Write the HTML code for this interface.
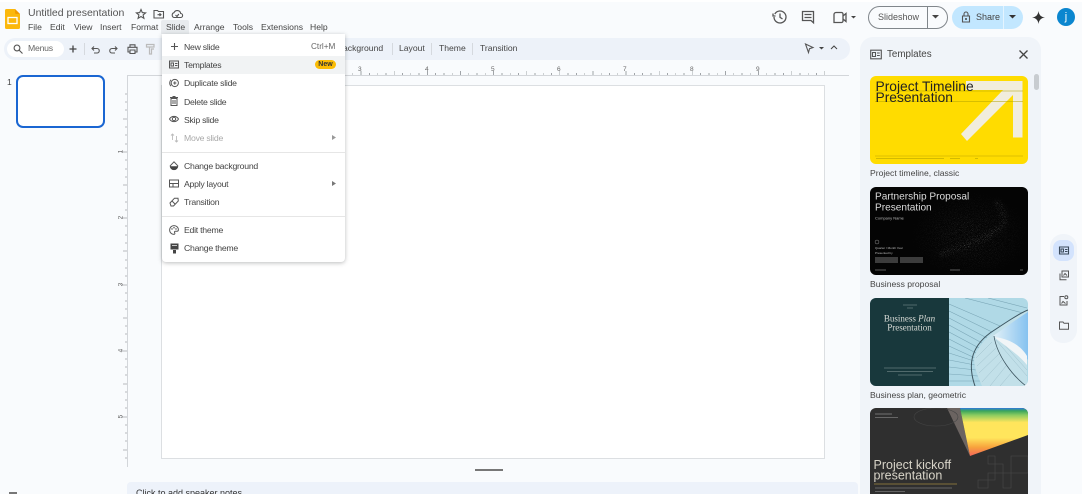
<!DOCTYPE html>
<html><head><meta charset="utf-8">
<style>
html,body{margin:0;padding:0;width:1082px;height:494px;overflow:hidden;background:#f9fbfd;font-family:"Liberation Sans",sans-serif;color:#444746}
#p{position:relative;width:1082px;height:494px;overflow:hidden;background:#f9fbfd;filter:blur(.3px)}
.a{position:absolute;white-space:nowrap}
.t{position:absolute;white-space:nowrap;font-size:8.600px;line-height:12px;color:#444}
.m{position:absolute;white-space:nowrap;font-size:8.700px;letter-spacing:-.25px;line-height:12px;color:#444;left:184px}
svg{position:absolute;overflow:visible}
.ic{fill:none;stroke:#555;stroke-width:1.1}
.sep{position:absolute;left:162px;width:183px;height:1px;background:#e6e6e6}
</style></head><body><div id="p">
<div class="a" style="left:0;top:0;width:1082px;height:2px;background:#fff"></div>

<!-- logo -->
<svg style="left:5px;top:9px" width="15" height="20" viewBox="0 0 15 20"><path d="M1.500 0H10L15 5V18.500A1.500 1.500 0 0 1 13.500 20H1.500A1.500 1.500 0 0 1 0 18.500V1.500A1.500 1.500 0 0 1 1.500 0Z" fill="#fbb80c"/><path d="M10 0L15 5H11.500A1.500 1.500 0 0 1 10 3.500Z" fill="#f29900"/><rect x="3" y="8.500" width="9" height="6" fill="none" stroke="#fff" stroke-width="1.300"/></svg>

<div class="a" style="left:28px;top:6px;font-size:10.500px;line-height:15px;color:#555">Untitled presentation</div>
<svg style="left:135px;top:8px" width="12" height="12" viewBox="0 0 12 12"><path class="ic" d="M6 1.500L7.300 4.600L10.600 4.900L8.100 7L8.900 10.300L6 8.500L3.100 10.300L3.900 7L1.400 4.900L4.700 4.600Z"/></svg>
<svg style="left:153px;top:8px" width="12" height="12" viewBox="0 0 12 12"><path class="ic" d="M1 2.500H4.500L5.500 3.500H10.500V10H1ZM4.500 6.700H8M6.500 5.300L8 6.700L6.500 8"/></svg>
<svg style="left:171px;top:8px" width="12" height="12" viewBox="0 0 12 12"><path class="ic" d="M3 9.500H9.500A2 2 0 0 0 9.700 5.500A3.500 3.500 0 0 0 3 4.700A2.500 2.500 0 0 0 3 9.500ZM4.500 7L6 8.500L7.800 6"/></svg>

<!-- menu bar -->
<div class="a" style="left:161px;top:20px;width:28px;height:14px;background:#e8ebee;border-radius:2px 2px 0 0"></div>
<div class="t" style="left:28px;top:21px">File</div>
<div class="t" style="left:50px;top:21px">Edit</div>
<div class="t" style="left:74px;top:21px">View</div>
<div class="t" style="left:100px;top:21px">Insert</div>
<div class="t" style="left:131px;top:21px">Format</div>
<div class="t" style="left:166px;top:21px">Slide</div>
<div class="t" style="left:194px;top:21px">Arrange</div>
<div class="t" style="left:233px;top:21px">Tools</div>
<div class="t" style="left:261px;top:21px">Extensions</div>
<div class="t" style="left:310px;top:21px">Help</div>

<!-- top right -->
<svg style="left:772px;top:9px" width="16" height="16" viewBox="0 0 16 16"><path class="ic" style="stroke-width:1.300" d="M2.800 5A6 6 0 1 1 2 8M1 4.500V7H3.500M8 4.500V8.300L10.500 10"/></svg>
<svg style="left:801px;top:10px" width="14" height="14" viewBox="0 0 14 14"><path class="ic" style="stroke-width:1.300" d="M1.500 1.500H12.500V12.800L10 10.500H1.500ZM3.500 4.500H10.500M3.500 7.500H10.500"/></svg>
<svg style="left:833px;top:11px" width="24" height="13" viewBox="0 0 24 13"><path class="ic" style="stroke-width:1.300" d="M1 3.500A2 2 0 0 1 3 1.500H8.500A1.500 1.500 0 0 1 10 3V10A1.500 1.500 0 0 1 8.500 11.500H1ZM10 5L13 2.500V10.500L10 8"/><path d="M18 5H23L20.500 7.500Z" fill="#444"/></svg>
<div class="a" style="left:868px;top:6px;width:78px;height:21px;border:1px solid #80868b;border-radius:12px"></div>
<div class="a" style="left:927px;top:6px;width:1px;height:23px;background:#80868b"></div>
<div class="t" style="left:878px;top:11px;font-size:9px;color:#555">Slideshow</div>
<svg style="left:932px;top:15px" width="8" height="4"><path d="M0 0H7L3.500 3.500Z" fill="#444"/></svg>
<div class="a" style="left:952px;top:6px;width:71px;height:23px;background:#c2e7ff;border-radius:12px"></div>
<div class="a" style="left:1003px;top:6px;width:1px;height:23px;background:#e4f4ff"></div>
<svg style="left:961px;top:11px" width="10" height="12" viewBox="0 0 10 12"><path class="ic" d="M1.500 5H8.500V11H1.500ZM3 5V3A2 2 0 0 1 7 3V5"/><circle cx="5" cy="8" r="1" fill="#444"/></svg>
<div class="t" style="left:976px;top:11px;font-size:9px;color:#444">Share</div>
<svg style="left:1009px;top:15px" width="8" height="4"><path d="M0 0H7L3.500 3.500Z" fill="#333"/></svg>
<svg style="left:1032px;top:11px" width="13" height="13" viewBox="0 0 13 13"><path d="M6.500 0C7 4 9 6 13 6.500C9 7 7 9 6.500 13C6 9 4 7 0 6.500C4 6 6 4 6.500 0Z" fill="#333"/></svg>
<div class="a" style="left:1057px;top:8px;width:18px;height:18px;border-radius:50%;background:#0b86cf;color:#fff;font-size:11px;line-height:18px;text-align:center">j</div>

<!-- toolbar -->
<div class="a" style="left:4px;top:38px;width:846px;height:22px;background:#edf2f9;border-radius:11px"></div>
<div class="a" style="left:7px;top:41px;width:57px;height:16px;background:#fff;border-radius:8px"></div>
<svg style="left:13px;top:44px" width="10" height="10" viewBox="0 0 10 10"><circle cx="4" cy="4" r="2.900" class="ic"/><path class="ic" d="M6 6L9.500 9.500"/></svg>
<div class="t" style="left:28px;top:42px;font-size:8.700px;letter-spacing:-.25px;color:#666">Menus</div>
<svg style="left:69px;top:45px" width="8" height="8"><path d="M4 .5V7.500M.5 4H7.500" stroke="#444" stroke-width="1.300"/></svg>
<div class="a" style="left:84px;top:43px;width:1px;height:12px;background:#d5d9de"></div>
<svg style="left:91px;top:45px" width="9" height="9" viewBox="0 0 9 9"><path class="ic" d="M1 3.500H6A2 2 0 0 1 6 8H3M3 1.500L1 3.500L3 5.500"/></svg>
<svg style="left:109px;top:45px" width="9" height="9" viewBox="0 0 9 9"><path class="ic" d="M8 3.500H3A2 2 0 0 0 3 8H6M6 1.500L8 3.500L6 5.500"/></svg>
<svg style="left:127px;top:44px" width="11" height="10" viewBox="0 0 11 10"><path class="ic" d="M3 3V.8H8V3M2.500 8H1V3.300H10V8H8.500M3 6H8V9.500H3Z"/></svg>
<svg style="left:146px;top:44px" width="9" height="11" viewBox="0 0 9 11"><path d="M.5 .5H8V3H.5ZM3.500 3.500V10H5.500V5H8" fill="none" stroke="#bbb" stroke-width="1.200"/></svg>

<div class="t" style="left:343px;top:42px">ackground</div>
<div class="a" style="left:392px;top:43px;width:1px;height:12px;background:#d5d9de"></div>
<div class="t" style="left:399px;top:42px">Layout</div>
<div class="a" style="left:431px;top:43px;width:1px;height:12px;background:#d5d9de"></div>
<div class="t" style="left:439px;top:42px">Theme</div>
<div class="a" style="left:472px;top:43px;width:1px;height:12px;background:#d5d9de"></div>
<div class="t" style="left:480px;top:42px">Transition</div>
<svg style="left:804px;top:43px" width="30" height="11" viewBox="0 0 30 11"><path class="ic" d="M1.500 1L9 4.500L5.500 5.700L4.500 9.500Z"/><path d="M15 4H20L17.500 6.500Z" fill="#444"/><path d="M27 6L30 3L33 6" fill="none" stroke="#444" stroke-width="1"/></svg>

<!-- ruler h -->
<div class="a" style="left:127px;top:75px;width:722px;height:1px;background:#d3d6da"></div>
<div class="a" style="left:162px;top:73px;width:663px;height:2px;background:repeating-linear-gradient(to right,#a0a4a8 0 .8px,transparent .8px 8.280px)"></div>
<div class="a" style="left:162px;top:71px;width:663px;height:4px;background:repeating-linear-gradient(to right,#a0a4a8 0 .8px,transparent .8px 33.120px)"></div>
<svg style="left:0;top:0" width="1082" height="494">
<g stroke="#a0a4a8" stroke-width=".7">
<path d="M125 94H127M125 102H127M125 110H127M123 119H127M125 127H127M125 135H127M125 144H127M121 152H127M125 160H127M125 169H127M125 177H127M123 185H127M125 193H127M125 202H127M125 210H127M121 218H127M125 226H127M125 235H127M125 243H127M123 251H127M125 260H127M125 268H127M125 276H127M121 285H127M125 293H127M125 301H127M125 309H127M123 318H127M125 326H127M125 334H127M125 342H127M121 351H127M125 359H127M125 367H127M125 375H127M123 384H127M125 392H127M125 400H127M125 408H127M121 417H127M125 425H127M125 433H127M125 441H127M123 450H127M125 458H127"/>
</g></svg>
<div class="a" style="left:127px;top:76px;width:1px;height:391px;background:#d3d6da"></div>
<div class="a" style="left:358px;top:66px;font-size:6.500px;color:#666">3</div>
<div class="a" style="left:425px;top:66px;font-size:6.500px;color:#666">4</div>
<div class="a" style="left:491px;top:66px;font-size:6.500px;color:#666">5</div>
<div class="a" style="left:557px;top:66px;font-size:6.500px;color:#666">6</div>
<div class="a" style="left:623px;top:66px;font-size:6.500px;color:#666">7</div>
<div class="a" style="left:690px;top:66px;font-size:6.500px;color:#666">8</div>
<div class="a" style="left:756px;top:66px;font-size:6.500px;color:#666">9</div>
<div class="a" style="left:119px;top:148px;font-size:6.500px;color:#666;transform:rotate(-90deg)">1</div>
<div class="a" style="left:119px;top:214px;font-size:6.500px;color:#666;transform:rotate(-90deg)">2</div>
<div class="a" style="left:119px;top:281px;font-size:6.500px;color:#666;transform:rotate(-90deg)">3</div>
<div class="a" style="left:119px;top:347px;font-size:6.500px;color:#666;transform:rotate(-90deg)">4</div>
<div class="a" style="left:119px;top:413px;font-size:6.500px;color:#666;transform:rotate(-90deg)">5</div>

<!-- filmstrip -->
<div class="a" style="left:7px;top:77px;font-size:8.500px;color:#444">1</div>
<div class="a" style="left:16px;top:75px;width:85px;height:49px;background:#fff;border:2px solid #1a66d2;border-radius:7px"></div>

<!-- slide -->
<div class="a" style="left:161px;top:85px;width:662px;height:372px;background:#fff;border:1px solid #dcdfe2"></div>
<div class="a" style="left:475px;top:469px;width:28px;height:1.500px;background:#777"></div>
<div class="a" style="left:127px;top:482px;width:731px;height:12px;background:#edf2fa;border-radius:4px 4px 0 0"></div>
<div class="a" style="left:136px;top:487px;font-size:9px;line-height:12px;color:#333">Click to add speaker notes</div>
<div class="a" style="left:9px;top:492px;width:8px;height:2px;background:#777"></div>

<!-- dropdown -->
<div class="a" style="left:162px;top:34px;width:183px;height:228px;background:#fff;border-radius:0 0 4px 4px;box-shadow:0 1px 4px rgba(60,64,67,.35)"></div>
<div class="a" style="left:162px;top:56px;width:183px;height:18px;background:#f1f3f4"></div>
<div class="sep" style="top:152px"></div>
<div class="sep" style="top:216px"></div>

<svg style="left:170px;top:42px" width="9" height="9"><path d="M4.500 1V8M1 4.500H8" stroke="#555" stroke-width="1.100"/></svg>
<div class="m" style="top:41px">New slide</div>
<div class="t" style="left:311px;top:41px;color:#666;font-size:8.200px">Ctrl+M</div>

<svg style="left:169px;top:60px" width="10" height="9" viewBox="0 0 10 9"><path d="M.5 1H9.500V8H.5ZM2 3H4.500V6H2ZM6 3.500H8.500M6 5.500H8.500" fill="none" stroke="#555" stroke-width="1"/></svg>
<div class="m" style="top:59px">Templates</div>
<div class="a" style="left:315px;top:60px;width:21px;height:9px;background:#fbbc04;border-radius:5px;font-size:7px;line-height:9px;text-align:center;color:#333;font-weight:bold">New</div>

<svg style="left:169px;top:78px" width="10" height="10" viewBox="0 0 10 10"><circle cx="5.800" cy="5" r="3.600" class="ic" style="stroke-width:1"/><path class="ic" style="stroke-width:1" d="M2 1.800A4.500 4.500 0 0 0 2 8.200M5.800 3.400V6.600M4.200 5H7.400"/></svg>
<div class="m" style="top:77px">Duplicate slide</div>

<svg style="left:170px;top:96px" width="8" height="10" viewBox="0 0 8 10"><path class="ic" style="stroke-width:1" d="M1 2.500H7V9.500H1ZM0 1.500H8M2.500 .5H5.500M3 4V8M5 4V8"/></svg>
<div class="m" style="top:96px">Delete slide</div>

<svg style="left:169px;top:115px" width="10" height="8" viewBox="0 0 10 8"><path class="ic" style="stroke-width:1" d="M.5 4C2.500 .5 7.500 .5 9.500 4C7.500 7.500 2.500 7.500 .5 4Z"/><circle cx="5" cy="4" r="1.700" class="ic" style="stroke-width:1"/></svg>
<div class="m" style="top:114px">Skip slide</div>

<svg style="left:170px;top:133px" width="9" height="10" viewBox="0 0 9 10"><path d="M2.500 7V1M1 2.500L2.500 1L4 2.500M6.500 3V9M5 7.500L6.500 9L8 7.500" fill="none" stroke="#bbb" stroke-width=".9"/></svg>
<div class="m" style="top:132px;color:#aaa">Move slide</div>
<svg style="left:332px;top:135px" width="4" height="5"><path d="M0 0L4 2.500L0 5Z" fill="#999"/></svg>

<svg style="left:169px;top:161px" width="10" height="10" viewBox="0 0 10 10"><path class="ic" style="stroke-width:1" d="M5 .8L8.800 4.800A3.800 3.800 0 0 1 1.200 4.800Z"/><path d="M1.200 5.200H8.800A3.800 3.800 0 0 1 1.200 5.200Z" fill="#444"/></svg>
<div class="m" style="top:160px">Change background</div>

<svg style="left:169px;top:179px" width="10" height="9" viewBox="0 0 10 9"><path class="ic" style="stroke-width:1" d="M.5 1H9.500V8H.5ZM.5 4.500H9.500M4 4.500V8"/></svg>
<div class="m" style="top:178px">Apply layout</div>
<svg style="left:332px;top:181px" width="4" height="5"><path d="M0 0L4 2.500L0 5Z" fill="#777"/></svg>

<svg style="left:169px;top:197px" width="10" height="10" viewBox="0 0 10 10"><path class="ic" style="stroke-width:1" d="M1 6L5.500 1.200H9L9.300 4L4.500 9H2ZM3 4L6.500 7.500"/></svg>
<div class="m" style="top:196px">Transition</div>

<svg style="left:169px;top:225px" width="10" height="10" viewBox="0 0 10 10"><path class="ic" style="stroke-width:1" d="M5 .6A4.400 4.400 0 1 0 5 9.400C6.200 9.400 6 8 5.500 7.500C5.200 6.800 5.800 6.200 6.500 6.300H8C9 6.300 9.400 5.500 9.400 4.800C9.400 2.400 7.400 .6 5 .6Z"/><circle cx="3" cy="4" r=".7" fill="#444"/><circle cx="5" cy="2.700" r=".7" fill="#444"/><circle cx="7" cy="4" r=".7" fill="#444"/></svg>
<div class="m" style="top:224px">Edit theme</div>

<svg style="left:170px;top:243px" width="9" height="11" viewBox="0 0 9 11"><path d="M.5 .5H8.500V6.500H.5Z" fill="#444"/><rect x="3" y="7" width="3" height="3.500" fill="#444"/><path d="M2 2.500H7" stroke="#fff" stroke-width=".7"/></svg>
<div class="m" style="top:242px">Change theme</div>

<!-- right panel -->
<div class="a" style="left:860px;top:37px;width:181px;height:457px;background:#f0f4f9;border-radius:13px 13px 0 0"></div>
<svg style="left:870px;top:49px" width="12" height="11" viewBox="0 0 12 11"><path class="ic" d="M.7 1.200H11.300V9.800H.7ZM2.500 3.500H5.500V7.500H2.500ZM7 4H9.800M7 6.500H9.800"/></svg>
<div class="a" style="left:887px;top:48px;font-size:9.800px;line-height:13px;color:#444">Templates</div>
<svg style="left:1019px;top:50px" width="9" height="9"><path d="M.5 .5L8.500 8.500M8.500 .5L.5 8.500" stroke="#444" stroke-width="1.300"/></svg>
<div class="a" style="left:1034px;top:74px;width:5px;height:16px;background:#c8ccd0;border-radius:3px"></div>

<!-- thumb 1 -->
<svg style="left:870px;top:76px" width="158" height="88" viewBox="0 0 158 88">
<defs><clipPath id="c1"><rect width="158" height="88" rx="6"/></clipPath></defs>
<g clip-path="url(#c1)"><rect width="158" height="88" fill="#ffdc00"/>
<path d="M96 5H152.500V61.500H143V19L97 65L91 58L133 14H96Z" fill="#f1eddd"/>
<path d="M5 15H153M5 25.500H153" stroke="#b0a000" stroke-width=".6"/>
<path d="M5 80H153" stroke="#d4b800" stroke-width=".8"/>
<text x="5.500" y="15" font-family="Liberation Sans,sans-serif" font-size="13.800" fill="#222">Project Timeline</text>
<text x="5.500" y="25.800" font-family="Liberation Sans,sans-serif" font-size="13.800" fill="#222">Presentation</text>
<path d="M6 82.500H74M80 82.500H90M105 82.500H108" stroke="#a89700" stroke-width=".6"/>
</g></svg>
<div class="t" style="left:870px;top:167px">Project timeline, classic</div>

<!-- thumb 2 -->
<svg style="left:870px;top:187px" width="158" height="88" viewBox="0 0 158 88">
<defs><clipPath id="c2"><rect width="158" height="88" rx="6"/></clipPath>
<filter id="n" x="0" y="0" width="100%" height="100%"><feTurbulence type="fractalNoise" baseFrequency="1.300" numOctaves="2" seed="7"/><feColorMatrix values="0 0 0 0 1 0 0 0 0 1 0 0 0 0 1 2 0 0 0 -1"/></filter>
<radialGradient id="mk" cx=".5" cy=".5" r=".5"><stop offset=".2" stop-color="#fff" stop-opacity=".28"/><stop offset="1" stop-color="#fff" stop-opacity="0"/></radialGradient>
<filter id="bl"><feGaussianBlur stdDeviation="2"/></filter>
<mask id="mm"><ellipse cx="100" cy="48" rx="62" ry="46" fill="url(#mk)"/><path d="M70 68C95 58 125 50 134 36C136 28 130 20 126 14" fill="none" stroke="#fff" stroke-width="4" stroke-opacity=".6" filter="url(#bl)"/></mask></defs>
<g clip-path="url(#c2)"><rect width="158" height="88" fill="#040404"/>
<rect width="158" height="88" filter="url(#n)" mask="url(#mm)"/>
<text x="5" y="12.500" font-family="Liberation Sans,sans-serif" font-size="10.100" fill="#ddd">Partnership Proposal</text>
<text x="5" y="23.500" font-family="Liberation Sans,sans-serif" font-size="10.100" fill="#ddd">Presentation</text>
<text x="5" y="32.500" font-family="Liberation Sans,sans-serif" font-size="4" fill="#bbb">Company Name</text>
<circle cx="7" cy="55" r="2" fill="none" stroke="#888" stroke-width=".5"/>
<text x="5" y="62" font-family="Liberation Sans,sans-serif" font-size="3" fill="#bbb">Quarter / Month Year</text>
<text x="5" y="67" font-family="Liberation Sans,sans-serif" font-size="3" fill="#bbb">Presented by</text>
<rect x="5" y="70" width="23" height="6" fill="#3c3c3c"/><rect x="30" y="70" width="23" height="6" fill="#3c3c3c"/>
<path d="M5 83H16M80 83H90M150 83H153" stroke="#777" stroke-width=".7"/>
</g></svg>
<div class="t" style="left:870px;top:278px">Business proposal</div>

<!-- thumb 3 -->
<svg style="left:870px;top:298px" width="158" height="88" viewBox="0 0 158 88">
<defs><clipPath id="c3"><rect width="158" height="88" rx="6"/></clipPath>
<linearGradient id="b3" x1="0" y1="0" x2="1" y2="0"><stop offset="0" stop-color="#e3f1f7"/><stop offset="1" stop-color="#86c2f0"/></linearGradient></defs>
<g clip-path="url(#c3)"><rect width="158" height="88" fill="#b0d9e6"/>
<g stroke="#7aa6b6" stroke-width=".6" fill="none"><path d="M79 6L130 28M79 13L122 34M79 20L117 40M79 27L112 45M79 34L109 50M79 41L106 55M79 48L105 60M79 55L104 63M79 62L105 67M79 69L106 72M79 76L108 78M79 83L110 83M95 0L157 16M118 0L157 10"/></g>
<path d="M157 13C140 22 115 35 105 57C102 67 108 78 112 88H157Z" fill="#c2e0e9"/>
<g stroke="#9fc0cc" stroke-width=".5"><path d="M106 60L122 44M107 68L126 50M109 75L129 56M112 84L132 62M120 88L136 68M130 88L142 74M126 42L157 78M132 44L157 72"/></g>
<path d="M123 38C135 30 148 20 158 14V62C148 48 135 42 123 38Z" fill="url(#b3)"/>
<path d="M124 39C136 40 150 46 157 58V67C147 55 135 48 124 39Z" fill="#f1f5f7"/>
<path d="M105 88C98 68 100 50 120 35C135 25 150 15 158 12" fill="none" stroke="#3d5560" stroke-width="1"/>
<path d="M124 38C127 58 143 78 156 88" fill="none" stroke="#3d5560" stroke-width=".8"/>
<rect width="79" height="88" fill="#18383c"/>
<text x="39.500" y="23.700" text-anchor="middle" font-family="Liberation Serif,serif" font-size="9" fill="#d8dbd6">Business <tspan font-style="italic">Plan</tspan></text>
<text x="39.500" y="32.700" text-anchor="middle" font-family="Liberation Serif,serif" font-size="9" fill="#d8dbd6">Presentation</text>
<path d="M33 7H47M37 10H43" stroke="#8a9c9c" stroke-width=".6"/>
<path d="M14 70H66M17 73.500H63M28 77H52" stroke="#8a9c9c" stroke-width=".6"/>
</g></svg>
<div class="t" style="left:870px;top:389px">Business plan, geometric</div>

<!-- thumb 4 -->
<svg style="left:870px;top:408px" width="158" height="88" viewBox="0 0 158 88">
<defs><clipPath id="c4"><rect width="158" height="100" rx="6"/></clipPath>
<linearGradient id="g4" x1="0" y1="0" x2="0" y2="1"><stop offset="0" stop-color="#2f78dd"/><stop offset=".06" stop-color="#3aa55c"/><stop offset=".15" stop-color="#8ccc60"/><stop offset=".3" stop-color="#ffe55c"/><stop offset=".62" stop-color="#ffe55c"/><stop offset=".82" stop-color="#f7a23c"/><stop offset="1" stop-color="#f4665a"/></linearGradient></defs>
<g clip-path="url(#c4)"><rect width="158" height="100" fill="#2f2f2f"/>
<path d="M77 0H90L100 48Z" fill="#6b6461"/>
<path d="M90 0H158V27L100 48Z" fill="url(#g4)"/>
<ellipse cx="66" cy="9" rx="22" ry="9" fill="none" stroke="#444" stroke-width=".6"/>
<path d="M118 48H125V56H118ZM141 48H158V65H141ZM125 56H133V65H125ZM133 65H141V80H133ZM108 72H118V80H108ZM118 65H125V72H118Z" fill="none" stroke="#4a4a4a" stroke-width=".6"/>
<path d="M5 6H22M5 9.700H28" stroke="#888" stroke-width=".7"/>
<text x="3.500" y="61" font-family="Liberation Sans,sans-serif" font-size="12.500" fill="#d8d4c8">Project kickoff</text>
<text x="3.500" y="71.500" font-family="Liberation Sans,sans-serif" font-size="12.500" fill="#d8d4c8">presentation</text>
<path d="M4 76H87" stroke="#a08a40" stroke-width=".7"/>
<path d="M5 80H82M5 83.500H35" stroke="#777" stroke-width=".7"/>
</g></svg>

<!-- side rail -->
<div class="a" style="left:1050px;top:234px;width:27px;height:109px;background:#f0f4f9;border-radius:13px"></div>
<div class="a" style="left:1053px;top:240px;width:21px;height:21px;background:#d3e3fd;border-radius:8px"></div>
<svg style="left:1059px;top:246px" width="10" height="9" viewBox="0 0 10 9"><path d="M.5 1H9.500V8H.5ZM2 3H4.500V6H2ZM6 3.500H8.500M6 5.500H8.500" fill="none" stroke="#3a4a5c" stroke-width="1.100"/></svg>
<svg style="left:1059px;top:270px" width="10" height="11" viewBox="0 0 10 11"><path class="ic" style="stroke-width:1" d="M3 1H9.500V7H3ZM1 3.500V9.800H7.500M4.500 5.500L6 3.500L8 5.500"/></svg>
<svg style="left:1059px;top:295px" width="10" height="11" viewBox="0 0 10 11"><path class="ic" style="stroke-width:1" d="M5 1.500H1V10H8V6M2.500 8.500L4 6.500L6.500 8.500"/><circle cx="7.300" cy="2.300" r="1.500" class="ic" style="stroke-width:1"/></svg>
<svg style="left:1059px;top:321px" width="10" height="9" viewBox="0 0 10 9"><path class="ic" style="stroke-width:1" d="M.5 1H4L5 2.300H9.500V8.200H.5Z"/></svg>
</div></body></html>
